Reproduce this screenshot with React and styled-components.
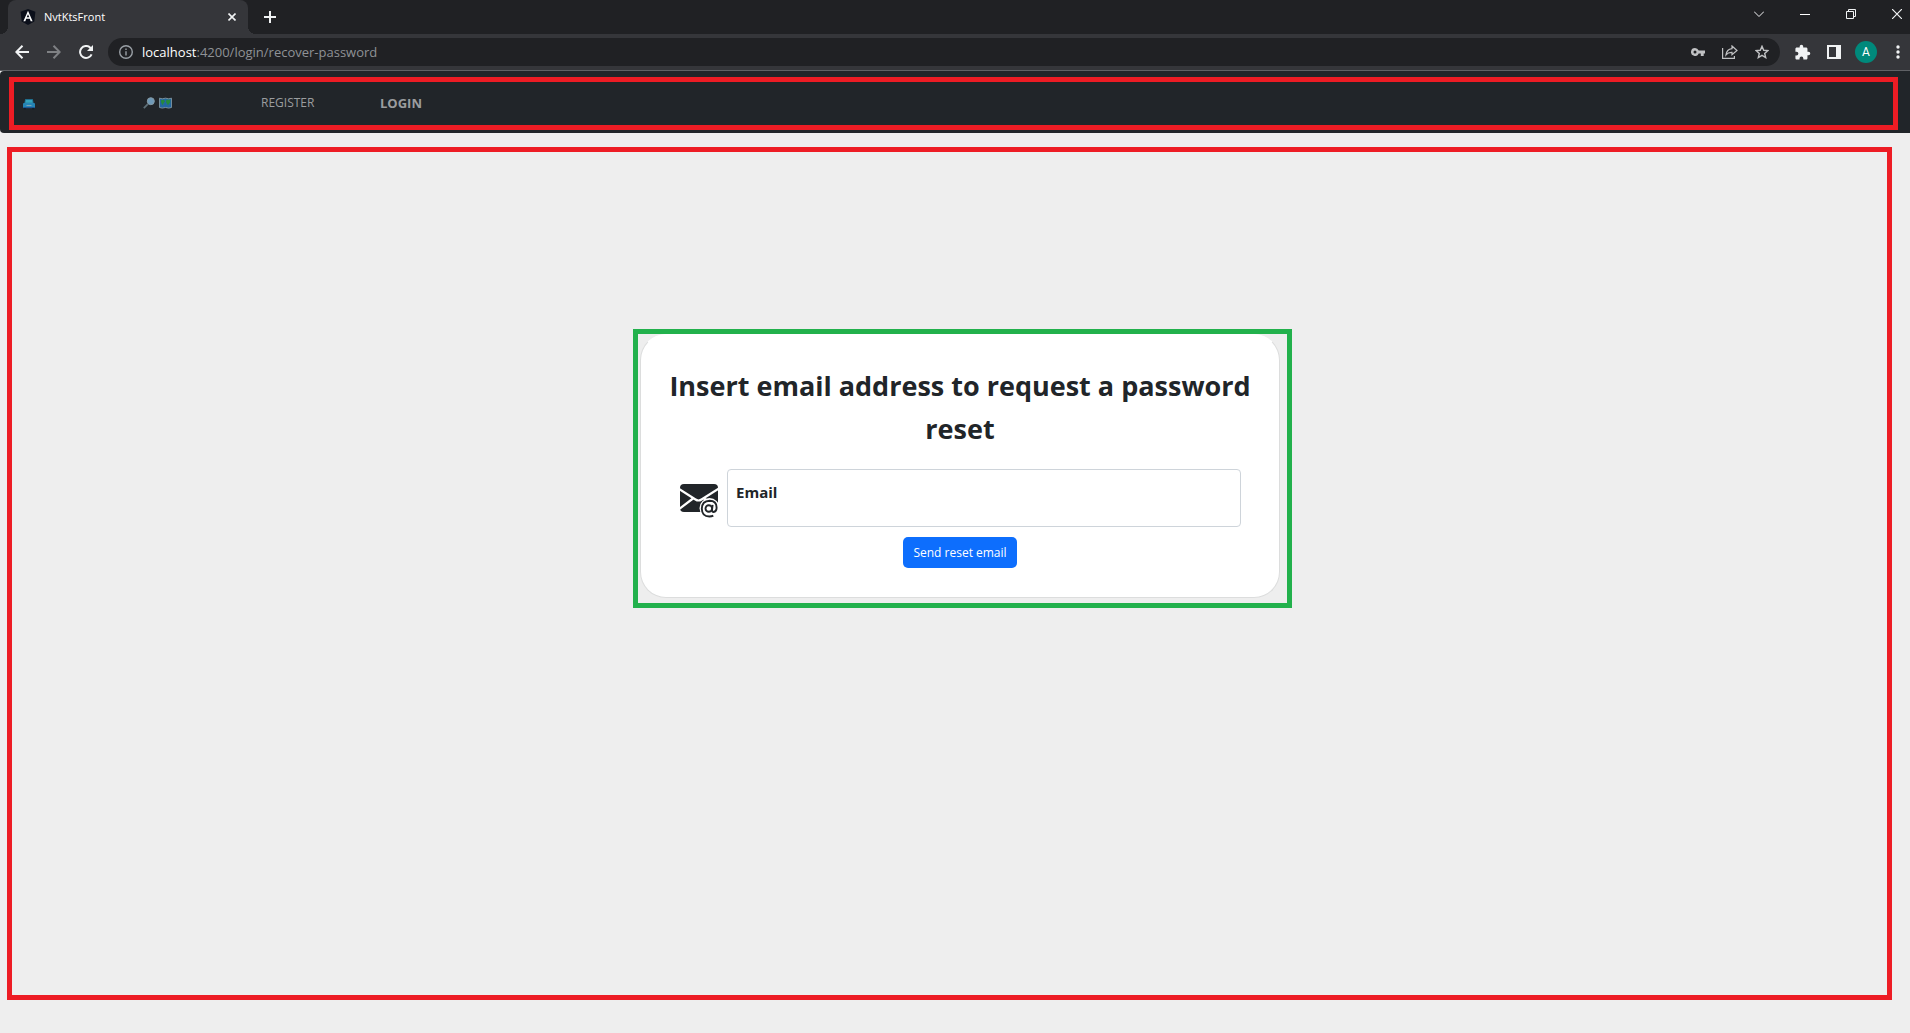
import React, { useState } from 'react';
import styled, { createGlobalStyle } from 'styled-components';

const GlobalStyle = createGlobalStyle`
  *, *::before, *::after { box-sizing: border-box; }
  body {
    margin: 0;
    background: #eee;
    color: #212529;
    font-family: "Open Sans", "Noto Sans", sans-serif;
  }
  button, input { font: inherit; color: inherit; }
`;

const Page = styled.div`
  min-height: 100vh;
  display: flex;
  flex-direction: column;
`;

const TabStrip = styled.header`
  display: flex;
  justify-content: space-between;
  height: 34px;
  padding-left: 8px;
  background: #202124;
  color: #fff;
`;

const Tabs = styled.div`
  display: flex;
  align-items: center;
`;

const Tab = styled.div`
  position: relative;
  display: flex;
  align-items: center;
  gap: 8px;
  width: 240px;
  height: 34px;
  padding: 0 6px 0 12px;
  border-radius: 8px 8px 0 0;
  background: #35363a;
  &::before, &::after {
    content: "";
    position: absolute;
    bottom: 0;
    width: 8px;
    height: 8px;
  }
  &::before {
    left: -8px;
    background: radial-gradient(circle at 0 0, transparent 8px, #35363a 8px);
  }
  &::after {
    right: -8px;
    background: radial-gradient(circle at 100% 0, transparent 8px, #35363a 8px);
  }
`;

const TabTitle = styled.span`
  flex: 1;
  font-size: 11px;
  line-height: 16px;
`;

const IconButton = styled.button`
  display: flex;
  align-items: center;
  justify-content: center;
  flex: none;
  width: ${(p) => p.$width || 32}px;
  height: ${(p) => p.$height || 28}px;
  padding: 0 0 0 ${(p) => p.$inset || 0}px;
  border: 0;
  background: none;
  color: ${(p) => p.$color || '#f1f3f4'};
`;

const WindowControls = styled.div`
  display: flex;
  align-items: flex-start;
`;

const Toolbar = styled.div`
  display: flex;
  align-items: center;
  height: 37px;
  padding-left: 6px;
  border-bottom: 1px solid #5f6165;
  background: #35363a;
`;

const AddressBar = styled.div`
  flex: 1;
  display: flex;
  align-items: center;
  height: 28px;
  margin: 0 6px;
  padding: 0 2px 0 11px;
  border-radius: 14px;
  background: #202124;
  color: #9aa0a6;
`;

const Address = styled.span`
  flex: 1;
  margin-left: 9px;
  font-size: 13px;
  line-height: 20px;
  color: #8f9296;
`;

const Host = styled.span`
  color: #fff;
`;

const Avatar = styled.span`
  display: grid;
  place-items: center;
  width: 22px;
  height: 22px;
  border-radius: 50%;
  background: #00897b;
  color: #fff;
  font-family: Roboto, sans-serif;
  font-size: 12px;
`;

const NavBar = styled.div`
  padding: 6px 12px 3px 9px;
  border-radius: 4px 0 0 4px;
  background: #212529;
`;

const Nav = styled.nav`
  display: flex;
  align-items: center;
  height: 53px;
  padding: 0 0 2px 9px;
  border: 5px solid #ed1c24;
`;

const NavLink = styled.a`
  display: flex;
  align-items: center;
  gap: 4px;
  width: 119px;
  color: #9b9d9f;
  font-size: ${(p) => (p.$strong ? 13 : 12)}px;
  font-weight: ${(p) => (p.$strong ? 700 : 400)};
  line-height: 20px;
  text-decoration: none;
`;

const Main = styled.main`
  flex: 1;
  display: flex;
  justify-content: center;
  align-items: flex-start;
  margin: 14px 18px 33px 7px;
  padding: 177px 0 40px 26px;
  border: 5px solid #ed1c24;
`;

const Frame = styled.section`
  width: 659px;
  max-width: 100%;
  padding: 0 7px 5px 2px;
  border: 5px solid #22b14c;
`;

const Card = styled.form`
  display: flex;
  flex-direction: column;
  align-items: center;
  padding: 29px 16px;
  border: 1px solid #dcdddd;
  border-top-color: #fff;
  border-radius: 26px;
  background: #fff;
`;

const Title = styled.h1`
  margin: 0;
  font-size: 27px;
  font-weight: 700;
  line-height: 43px;
  text-align: center;
`;

const FieldRow = styled.div`
  display: flex;
  align-items: center;
  gap: 8px;
  width: 100%;
  margin: 19px 0 10px;
  padding: 0 22px;
`;

const Field = styled.div`
  flex: 1;
  display: flex;
  flex-direction: column;
  height: 58px;
  padding: 11px 8px 4px;
  border: 1px solid #ced4da;
  border-radius: 4px;
`;

const Label = styled.label`
  font-size: 15px;
  font-weight: 700;
  line-height: 22px;
`;

const Input = styled.input`
  width: 100%;
  height: 18px;
  padding: 0;
  border: 0;
  outline: 0;
  background: transparent;
  font-size: 14px;
`;

const SubmitButton = styled.button`
  height: 31px;
  padding: 0 10px;
  border: 0;
  border-radius: 5px;
  background: #0d6efd;
  color: #fff;
  font-size: 12px;
  line-height: 20px;
`;

const Svg = ({ w = 16, h = w, box, children, ...rest }) => (
  <svg width={w} height={h} viewBox={box || `0 0 ${w} ${h}`} fill="none" stroke="currentColor" aria-hidden="true" {...rest}>
    {children}
  </svg>
);

const AngularIcon = () => (
  <Svg stroke="none">
    <path d="M8 0l7.4 2.7-1.1 9.8L8 16l-6.300-3.500L.6 2.700z" fill="#0b0f1a" />
    <path d="M8 1.800L3.400 12.200h1.900l.9-2.400h3.600l.9 2.400h1.900zm0 3.400l1.300 3.100H6.700z" fill="#fff" />
  </Svg>
);

const CarIcon = () => (
  <Svg w={12} h={14} box="0 -3 12 14" stroke="none">
    <path d="M2.200 0h7.600l1 4.500H1.200z" fill="#1f6f8f" />
    <path d="M2.900 1h6.200l.6 2.800H2.300z" fill="#35a3bd" />
    <rect y="4" width="12" height="5" rx="1" fill="#2585b5" />
    <path d="M3.500 6.500h5" stroke="#7fa0b3" />
    <path d="M.5 8h11v1.200H.5z" fill="#1c5594" />
    <path d="M.8 9.200h2v1h-2zM9.200 9.200h2v1h-2z" fill="#0d1b24" />
  </Svg>
);

const MagnifierIcon = () => (
  <Svg w={13} h={12} box="-1 0 13 12" stroke="none">
    <path d="M.8 11.200l4-4" stroke="#5f7078" strokeWidth="1.800" />
    <circle cx="7.800" cy="4.200" r="3.500" fill="#6f9ab8" stroke="#8499a5" strokeWidth="1" />
  </Svg>
);

const MapIcon = () => (
  <Svg w={13} h={12} box="0 0 14 12" stroke="none">
    <path d="M.5.800l3 .7 3.500-.7 3.500.7 3-.7v10l-3 .7-3.500-.7-3.500.7-3-.7z" fill="#2467a0" stroke="#7f95a0" />
    <path d="M2 3l3-.5 1.500 1.500-1.500 2-1 2.500L2.500 6zM8 2.500h4v3L9.500 8.500 7.500 5z" fill="#258a3c" />
  </Svg>
);

const MailIcon = () => (
  <svg width="40" height="42" viewBox="0 -6 40 42" aria-hidden="true">
    <rect x="1" y="1" width="38" height="28" rx="4" fill="#212529" />
    <path d="M0 6l16.500 10.500q3 2 6 0L40 5.500M0 26l14-10.500M25 15.500l15 10" fill="none" stroke="#fff" strokeWidth="2.200" />
    <circle cx="30.500" cy="25" r="10" fill="#fff" />
    <g fill="none" stroke="#212529" strokeWidth="1.900">
      <circle cx="29.800" cy="25.500" r="3.300" />
      <path d="M33.600 21.800l-.6 5.200q0 2 1.600 2 3-.4 3-4.500 0-6.800-7-6.800-7.600.2-7.800 8 .2 7.600 7.500 7.800 2.300 0 4-.9" />
    </g>
  </svg>
);

export default function App() {
  const [email, setEmail] = useState('');
  return (
    <Page>
      <GlobalStyle />
      <TabStrip>
        <Tabs>
          <Tab>
            <AngularIcon />
            <TabTitle>NvtKtsFront</TabTitle>
            <IconButton $width={20} aria-label="Close tab">
              <Svg w={8} strokeWidth="1.600"><path d="M.5.500l7 7M7.500.500l-7 7" /></Svg>
            </IconButton>
          </Tab>
          <IconButton $width={44} aria-label="New tab">
            <Svg w={12} strokeWidth="2"><path d="M6 0v12M0 6h12" /></Svg>
          </IconButton>
        </Tabs>
        <WindowControls>
          <IconButton $width={46} aria-label="Search tabs">
            <Svg w={10} h={6}><path d="M0 .5l5 5 5-5" /></Svg>
          </IconButton>
          <IconButton $width={46} aria-label="Minimize">
            <Svg w={10} h={2} stroke="none"><path d="M0 1h10v1H0z" fill="#fff" shapeRendering="crispEdges" /></Svg>
          </IconButton>
          <IconButton $width={46} aria-label="Restore">
            <Svg w={10}><path d="M.5 2.500h7v7h-7zM2.500 2.500v-2h7v7h-2" /></Svg>
          </IconButton>
          <IconButton $width={36} $inset={10} aria-label="Close">
            <Svg w={10} strokeWidth="1.200"><path d="M0 0l10 10M10 0L0 10" /></Svg>
          </IconButton>
        </WindowControls>
      </TabStrip>
      <Toolbar>
        <IconButton aria-label="Back">
          <Svg w={14} strokeWidth="2"><path d="M14 7H1.500M7.500.800L1.300 7l6.200 6.200" /></Svg>
        </IconButton>
        <IconButton $color="#7f8184" aria-label="Forward">
          <Svg w={14} strokeWidth="2"><path d="M0 7h12.500M6.500.800L12.700 7l-6.200 6.200" /></Svg>
        </IconButton>
        <IconButton aria-label="Reload">
          <Svg w={14} strokeWidth="2">
            <path d="M12.600 9.300A6 6 0 1 1 11.300 2.700L12.500 4" />
            <path d="M14 0v6H8z" fill="currentColor" stroke="none" />
          </Svg>
        </IconButton>
        <AddressBar>
          <Svg w={14} strokeWidth="1.400">
            <circle cx="7" cy="7" r="6.300" />
            <path d="M7 6.200v4.300M7 3.500v1.500" />
          </Svg>
          <Address><Host>localhost</Host>:4200/login/recover-password</Address>
          <IconButton $color="#c0c1c3" aria-label="Passwords">
            <Svg w={14} h={8} stroke="none" fill="currentColor">
              <path fillRule="evenodd" d="M4 0a4 4 0 0 1 3.700 2.500H14v3h-1.300V8H9.800V5.500H7.700A4 4 0 1 1 4 0zm0 2.500a1.500 1.500 0 1 0 0 3 1.500 1.500 0 0 0 0-3z" />
            </Svg>
          </IconButton>
          <IconButton $color="#c0c1c3" aria-label="Share">
            <Svg w={16} h={14} strokeWidth="1.200">
              <path d="M.6 3v10.400h11.800V11" />
              <path d="M10 1l5 4.500-5 4.300V7.300q-4-.2-6 2.500.6-5.500 6-6.200z" />
            </Svg>
          </IconButton>
          <IconButton $color="#c0c1c3" aria-label="Bookmark">
            <Svg w={14} strokeWidth="1.400"><path d="M7 1.300l1.700 4 4.200.3-3.200 2.800 1 4.200L7 10.400l-3.700 2.200 1-4.200L1.100 5.600l4.200-.3z" /></Svg>
          </IconButton>
        </AddressBar>
        <IconButton aria-label="Extensions">
          <Svg w={17} box="0 0 24 24" stroke="none" fill="currentColor">
            <path d="M20.500 11H19V7c0-1.100-.9-2-2-2h-4V3.500a2.500 2.500 0 0 0-5 0V5H4c-1.100 0-2 .9-2 2v3.800h1.500a2.700 2.700 0 0 1 0 5.400H2V20c0 1.100.9 2 2 2h3.800v-1.500a2.700 2.700 0 0 1 5.400 0V22H17c1.100 0 2-.9 2-2v-4h1.500a2.500 2.500 0 0 0 0-5z" />
          </Svg>
        </IconButton>
        <IconButton aria-label="Side panel">
          <Svg w={14} stroke="none" fill="currentColor">
            <path fillRule="evenodd" d="M0 0h14v14H0zM2 2v10h7V2z" />
          </Svg>
        </IconButton>
        <IconButton aria-label="Profile"><Avatar>A</Avatar></IconButton>
        <IconButton $width={28} $inset={4} aria-label="Menu">
          <Svg w={4} h={14} stroke="none" fill="currentColor">
            <circle cx="2" cy="2" r="1.700" /><circle cx="2" cy="7" r="1.700" /><circle cx="2" cy="12" r="1.700" />
          </Svg>
        </IconButton>
      </Toolbar>
      <NavBar>
        <Nav>
          <NavLink href="#home" aria-label="Home"><CarIcon /></NavLink>
          <NavLink href="#map" aria-label="Search map"><MagnifierIcon /><MapIcon /></NavLink>
          <NavLink href="#register">REGISTER</NavLink>
          <NavLink href="#login" $strong>LOGIN</NavLink>
        </Nav>
      </NavBar>
      <Main>
        <Frame>
          <Card onSubmit={(e) => e.preventDefault()}>
            <Title>Insert email address to request a password reset</Title>
            <FieldRow>
              <MailIcon />
              <Field>
                <Label htmlFor="email">Email</Label>
                <Input id="email" type="email" value={email} onChange={(e) => setEmail(e.target.value)} />
              </Field>
            </FieldRow>
            <SubmitButton type="submit">Send reset email</SubmitButton>
          </Card>
        </Frame>
      </Main>
    </Page>
  );
}
